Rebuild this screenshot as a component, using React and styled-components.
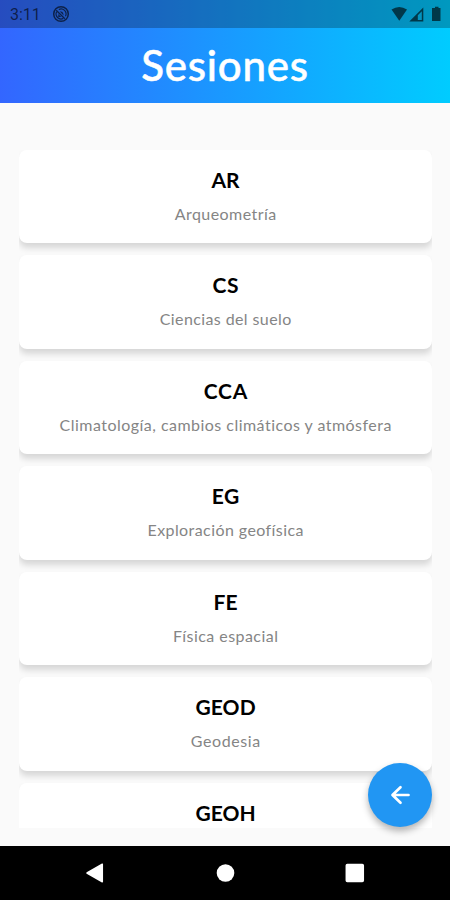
import React from "react";
import styled, { createGlobalStyle } from "styled-components";

const Global = createGlobalStyle`
  * { box-sizing: border-box; }
  body { margin: 0; background: #fafafa; }
`;

const Screen = styled.div`
  position: relative;
  display: flex;
  flex-direction: column;
  width: 450px;
  height: 900px;
  overflow: hidden;
  background: #fafafa;
  font-family: Lato, "Open Sans", sans-serif;
`;

const Header = styled.header`
  flex: none;
  height: 103px;
  background: linear-gradient(90deg, #3366ff, #00ccff);
`;

const StatusBar = styled.div`
  display: flex;
  align-items: center;
  height: 28px;
  padding: 0 7px 0 10px;
  background: rgba(0, 0, 0, 0.25);
  color: rgba(0, 0, 0, 0.62);
`;

const Clock = styled.span`
  width: 42px;
  font: 400 16px/28px Roboto, sans-serif;
  letter-spacing: 0;
  padding-top: 2px;
`;

const StatusIcons = styled.div`
  display: flex;
  margin-left: auto;
`;

const Title = styled.h1`
  margin: 0;
  height: 75px;
  text-align: center;
  color: #fff;
  font-size: 42px;
  font-weight: 500;
  line-height: 74px;
  letter-spacing: 0.8px;
  -webkit-text-stroke: 0.5px #fff;
`;

const List = styled.main`
  display: flex;
  flex-direction: column;
  gap: 12.4px;
  height: 678px;
  margin: 47px 18px 0 19px;
  overflow: hidden;
`;

const Card = styled.section`
  flex: none;
  height: 93.1px;
  padding-top: 17px;
  border-radius: 8px;
  background: #fff;
  box-shadow: 0 5px 6px rgba(0, 0, 0, 0.14);
  text-align: center;
`;

const Code = styled.h2`
  margin: 0;
  color: #000;
  font-size: 21px;
  font-weight: 700;
  line-height: 26px;
  letter-spacing: ${(p) => p.$spacing}px;
  margin-right: ${(p) => -p.$spacing}px;
`;

const Name = styled.p`
  margin: 10px 0 0;
  color: #858585;
  font-size: 16px;
  line-height: 22px;
  letter-spacing: ${(p) => p.$spacing}px;
  margin-right: ${(p) => -p.$spacing}px;
`;

const BackButton = styled.button`
  position: absolute;
  left: 368px;
  top: 763px;
  width: 64px;
  height: 64px;
  padding: 0;
  border: 0;
  border-radius: 50%;
  background: #2196f3;
  box-shadow: 0 4px 7px rgba(0, 0, 0, 0.3);
`;

const NavBar = styled.nav`
  margin-top: auto;
  height: 54px;
  background: #000;
`;

const Drawing = styled.svg`
  display: block;
`;

const sessions = [
  { code: "AR", name: "Arqueometría", cs: 0, ns: 0.45 },
  { code: "CS", name: "Ciencias del suelo", cs: 0.8, ns: 0.4 },
  { code: "CCA", name: "Climatología, cambios climáticos y atmósfera", cs: 0.8, ns: 0.47 },
  { code: "EG", name: "Exploración geofísica", cs: 0.5, ns: 0.42 },
  { code: "FE", name: "Física espacial", cs: 0, ns: 0.45 },
  { code: "GEOD", name: "Geodesia", cs: 0.1, ns: 0.6 },
  { code: "GEOH", cs: 0, ns: 0 },
];

export default function App() {
  return (
    <Screen>
      <Global />
      <Header>
        <StatusBar>
          <Clock>3:11</Clock>
          <Drawing width="18" height="18" viewBox="0 0 18 18" fill="none" stroke="currentColor">
            <circle cx="9" cy="9" r="7.3" strokeWidth="1.5" />
            <path d="M4.6 6.8A5 5 0 0 0 11.2 13.5M6.8 4.5A5 5 0 0 1 13.5 11.2" strokeWidth="1.2" />
            <path d="M4.2 5.2 12.8 13.8" strokeWidth="1.3" />
            <path d="M6.3 9.1 9.2 12H6.3ZM7.8 6.6Q11.4 5.8 11.6 10.4Z" fill="currentColor" stroke="none" />
          </Drawing>
          <StatusIcons>
            <Drawing width="52" height="18" viewBox="0 0 52 18" fill="currentColor">
              <path d="M0.5 4.5Q8.3-0.5 16 4.5L8.3 15.7Z" />
              <path fillRule="evenodd" d="M32.3 2.5V16.5H18.3ZM30.8 6.2 26.8 10.2V15H30.8Z" />
              <path d="M42 3H44V1.7H47.5V3H49.5V16H41V3Z" />
            </Drawing>
          </StatusIcons>
        </StatusBar>
        <Title>Sesiones</Title>
      </Header>
      <List>
        {sessions.map((s) => (
          <Card key={s.code}>
            <Code $spacing={s.cs}>{s.code}</Code>
            {s.name && <Name $spacing={s.ns}>{s.name}</Name>}
          </Card>
        ))}
      </List>
      <BackButton aria-label="Volver">
        <Drawing width="64" height="64" viewBox="0 0 64 64" fill="none" stroke="#fff" strokeWidth="2.7" strokeLinecap="round" strokeLinejoin="round">
          <path d="M40.5 32H25M32.5 24.2 24.5 32 32.5 39.8" />
        </Drawing>
      </BackButton>
      <NavBar>
        <Drawing width="450" height="54" viewBox="0 0 450 54" fill="#fff" stroke="#fff" strokeLinejoin="round">
          <path d="M87 27 102.3 18.2V35.8Z" strokeWidth="1.5" />
          <circle cx="225.5" cy="27" r="8.8" stroke="none" />
          <rect x="346.3" y="18.5" width="17" height="17" rx="1" strokeWidth="1.5" />
        </Drawing>
      </NavBar>
    </Screen>
  );
}
